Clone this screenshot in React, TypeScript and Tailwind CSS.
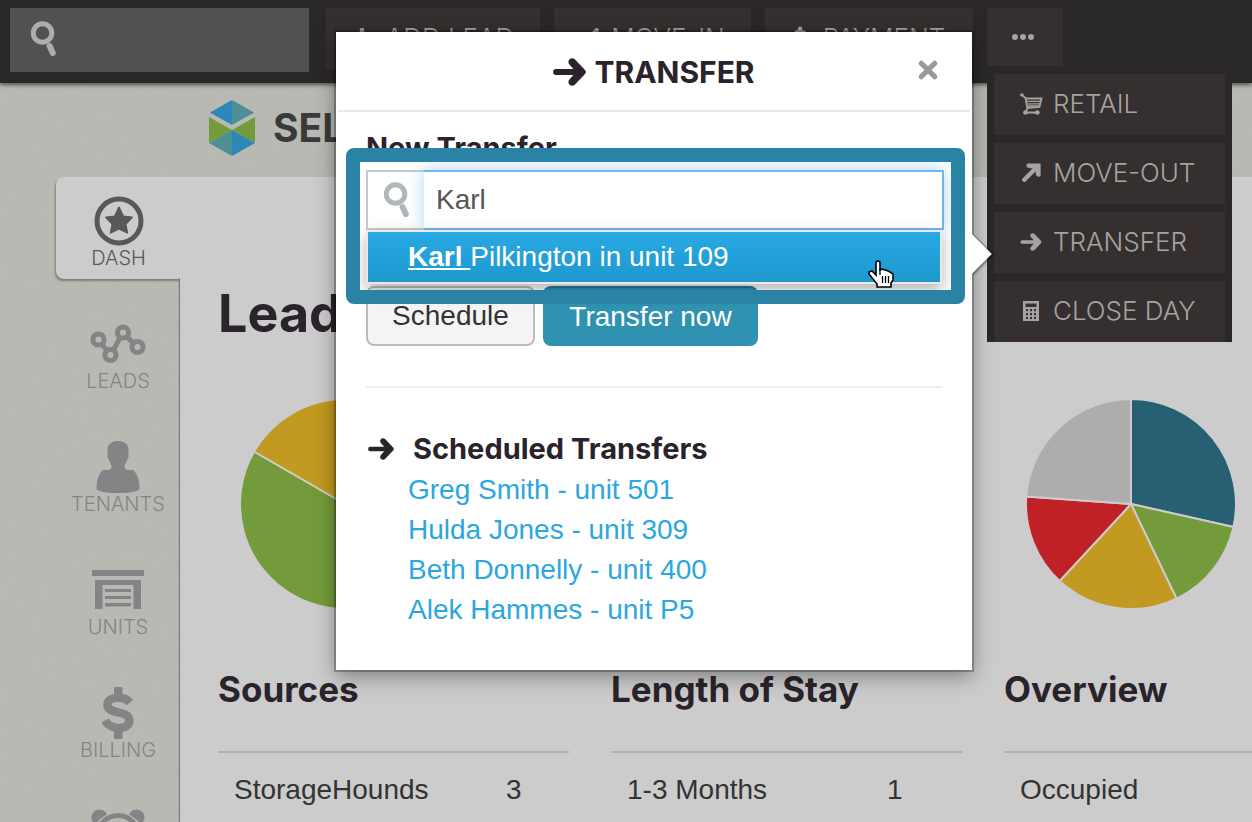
import { ReactNode, useState } from "react"

type Slice = { from: number; to: number; color: string }

type Report = {
  title: string
  slices: Slice[]
  row: string
  count?: string
  rowClass: string
}

const REPORTS: Report[] = [
  {
    title: "Sources",
    slices: [
      { from: 0, to: 120, color: "#276073" },
      { from: 120, to: 300, color: "#739b3b" },
      { from: 300, to: 360, color: "#c29a21" },
    ],
    row: "StorageHounds",
    count: "3",
    rowClass: "w-[288px] pl-4",
  },
  {
    title: "Length of Stay",
    slices: [
      { from: 0, to: 200, color: "#276073" },
      { from: 200, to: 360, color: "#739b3b" },
    ],
    row: "1-3 Months",
    count: "1",
    rowClass: "w-[276px] pl-4",
  },
  {
    title: "Overview",
    slices: [
      { from: 0, to: 102.6, color: "#276073" },
      { from: 102.6, to: 154.3, color: "#739b3b" },
      { from: 154.3, to: 222.8, color: "#c29a21" },
      { from: 222.8, to: 274.1, color: "#c02126" },
      { from: 274.1, to: 360, color: "#adadad" },
    ],
    row: "Occupied",
    rowClass: "w-[288px] pl-4",
  },
]

const TRANSFERS = [
  "Greg Smith - unit 501",
  "Hulda Jones - unit 309",
  "Beth Donnelly - unit 400",
  "Alek Hammes - unit P5",
]

const point = (deg: number) => {
  const rad = (deg * Math.PI) / 180
  return `${105 + 105 * Math.sin(rad)} ${105 - 105 * Math.cos(rad)}`
}

const Pie = ({ slices }: { slices: Slice[] }) => (
  <svg viewBox="0 0 210 210" className="ml-[22px] size-[210px]">
    {slices.map(({ from, to, color }) => (
      <path
        key={from}
        d={`M105 105 L${point(from)} A105 105 0 ${to - from > 180 ? 1 : 0} 1 ${point(to)} Z`}
        fill={color}
        stroke="#cccccc"
        strokeWidth="2"
      />
    ))}
  </svg>
)

const SearchIcon = () => (
  <svg viewBox="0 0 26 36" className="h-9 w-[26px]" fill="none" stroke="currentColor">
    <circle cx="11.500" cy="12" r="9.300" strokeWidth="5" />
    <path d="M18.600 25 L21.800 32" strokeWidth="6" strokeLinecap="round" />
  </svg>
)

const ArrowIcon = ({ className }: { className: string }) => (
  <svg viewBox="0 0 33 28" className={className}>
    <path d="M3 14 H24" stroke="currentColor" strokeWidth="5.8" strokeLinecap="round" />
    <path
      d="M16.6 1.2 C18 0 20.4 0 22 1.6 L32 12 Q33.6 14 32 16 L22 26.400 C20.400 28 18 28 16.600 26.800 C15 25.400 15 23 16.400 21.600 L23 14 L16.400 6.400 C15 5 15 2.600 16.600 1.200 Z"
      fill="currentColor"
    />
  </svg>
)

const DiagonalIcon = ({ className }: { className: string }) => (
  <svg viewBox="0 0 19 19" className={className}>
    <path d="M2.300 16.700 L14 5" stroke="currentColor" strokeWidth="4.400" strokeLinecap="round" />
    <path
      d="M6 0.400 H18.600 V12 C18.600 14.200 14.800 14.600 14.200 12 L13 6 L6.400 4.800 C3.600 4 4.200 0.800 6 0.400 Z"
      fill="currentColor"
    />
  </svg>
)

const PlusIcon = () => (
  <svg viewBox="0 0 20 20" className="size-5">
    <path d="M10 2 V18 M2 10 H18" stroke="currentColor" strokeWidth="4.400" strokeLinecap="round" />
  </svg>
)

const DollarIcon = ({ className }: { className: string }) => (
  <svg viewBox="0 0 32 52" className={className}>
    <rect x="12" y="0" width="8.500" height="12" rx="1.500" fill="currentColor" />
    <rect x="12" y="40" width="8.500" height="12" rx="1.500" fill="currentColor" />
    <path
      d="M28 15.500 C23 9.500 6 8.500 5.500 17.500 C5.500 28.500 27.500 22 27.500 34 C26.500 43.500 8 43 3 33.500"
      fill="none"
      stroke="currentColor"
      strokeWidth="8.500"
    />
  </svg>
)

const CartIcon = () => (
  <svg viewBox="0 0 23 22" className="h-[22px] w-[23px]" fill="none" stroke="currentColor">
    <path d="M2 2 L5.500 5 L7.400 15.500 L5.500 19.500 H17" strokeWidth="1.800" />
    <path d="M6 5.500 H21.500 L19.500 14 L7.500 15.200" strokeWidth="1.800" />
    <path d="M7 8.400 H20.500 M7.500 10.800 H20 M8 13 H19.500" strokeWidth="1.300" />
    <circle cx="1.800" cy="1.900" r="1.700" fill="currentColor" stroke="none" />
    <circle cx="5.400" cy="19.500" r="2.300" fill="currentColor" stroke="none" />
    <circle cx="17.400" cy="19.500" r="2.300" fill="currentColor" stroke="none" />
  </svg>
)

const CalculatorIcon = () => (
  <svg viewBox="0 0 16 20" className="h-5 w-4">
    <path
      fillRule="evenodd"
      fill="currentColor"
      d="M0 0H16V20H0Z M2.500 2.500V6H13.500V2.500Z M3 8V10.200H5V8Z M7 8V10.200H9V8Z M11 8V10.200H13V8Z M3 12V14.200H5V12Z M7 12V14.200H9V12Z M11 12V14.200H13V12Z M3 16V18H5V16Z M7 16V18H9V16Z M11 16V18H13V16Z"
    />
  </svg>
)

const DashIcon = () => (
  <svg viewBox="0 0 50 50" className="size-[50px]">
    <circle cx="25" cy="25" r="22" fill="none" stroke="currentColor" strokeWidth="5" />
    <path
      d="M25 11.500 L29.200 20.300 L38 21.400 L31.600 28 L33.300 36.800 L25 32.600 L16.700 36.800 L18.400 28 L12 21.400 L20.800 20.300 Z"
      fill="currentColor"
      stroke="currentColor"
      strokeWidth="1.800"
      strokeLinejoin="round"
    />
  </svg>
)

const LeadsIcon = () => (
  <svg viewBox="0 0 56 40" className="h-10 w-14" fill="none" stroke="currentColor">
    <path d="M12 20.500 L16.500 26 M24 25 L29.500 14.500 M37.500 13 L42 18" strokeWidth="5" />
    <g strokeWidth="5">
      <circle cx="8.500" cy="15.500" r="5.600" />
      <circle cx="20.500" cy="31" r="5.600" />
      <circle cx="33" cy="8.500" r="5.600" />
      <circle cx="47.500" cy="23" r="5.600" />
    </g>
  </svg>
)

const TenantsIcon = () => (
  <svg viewBox="0 0 44 52" className="h-[52px] w-11">
    <path
      d="M22 0 C29 0 32.500 3.500 32.500 9 V13 C33 15 32.500 17 31.500 18 C31 21 28.500 23 28.500 25.500 C28.500 28 30 29 32 29 H37 C41 32 43.500 39 43.500 47.500 C43.500 50 36 52 22 52 C8 52 0.500 50 0.500 47.500 C0.500 39 3 32 7 29 H12 C14 29 15.500 28 15.500 25.500 C15.500 23 13 21 12.500 18 C11.500 17 11 15 11.500 13 V9 C11.500 3.500 15 0 22 0 Z"
      fill="currentColor"
    />
  </svg>
)

const UnitsIcon = () => (
  <svg viewBox="0 0 52 40" className="h-10 w-[52px]">
    <path
      d="M0 0H52V6H0Z M3 10H49V39H41.500V15H10.500V39H3Z M13 19H39V22H13Z M13 26H39V29H13Z M13 33H39V36.500H13Z"
      fill="currentColor"
    />
  </svg>
)

const ClockIcon = () => (
  <svg viewBox="0 0 54 54" className="size-[54px]">
    <circle cx="8.500" cy="8.500" r="8" fill="currentColor" />
    <circle cx="45.500" cy="8.500" r="8" fill="currentColor" />
    <circle cx="27" cy="29" r="26" fill="#b8b9b3" />
    <circle cx="27" cy="27" r="20.500" fill="none" stroke="currentColor" strokeWidth="5" />
    <path d="M27 16 V28 H36" fill="none" stroke="currentColor" strokeWidth="4" />
  </svg>
)

const LogoIcon = () => (
  <svg viewBox="0 0 46 56" className="h-14 w-[46px]">
    <path d="M23 0 V25 L1 12.500 Z" fill="#2e88b7" />
    <path d="M23 0 V25 L45 12.500 Z" fill="#4c9094" />
    <path d="M0 17 L23 30 L0 43 Z" fill="#739b3b" />
    <path d="M46 17 L23 30 L46 43 Z" fill="#739b3b" />
    <path d="M23 30 V56 L0 43 Z" fill="#4c9094" />
    <path d="M23 30 V56 L46 43 Z" fill="#2e88b7" />
  </svg>
)

const HandCursor = () => (
  <svg viewBox="0 0 26 28" className="h-7 w-[26px]">
    <path
      d="M8 2 Q10 0 12 2 V10 L14 9 L17 10 L19 10.500 L22 12 L25 14 V20 L23 23 V27 H9 V24 L5 19 L1 14 V12 L4 11 L8 15 Z"
      fill="#ffffff"
      stroke="#000000"
      strokeWidth="1.600"
    />
    <path d="M14.500 16 V23 M17.500 16 V23 M20.500 16 V23 M12 9 V15" stroke="#000000" strokeWidth="1.300" />
  </svg>
)

const ToolbarButton = ({ className, children }: { className: string; children: ReactNode }) => (
  <button
    className={`flex h-[61px] shrink-0 items-center justify-center bg-[#35302f] pb-0.5 text-[26px] font-light ${className}`}
  >
    {children}
  </button>
)

const MenuItem = ({ icon, label }: { icon: ReactNode; label: string }) => (
  <button className="flex h-[61px] items-center gap-2 bg-[#35302f] pb-0.5 pl-[23px] text-[26px] font-light whitespace-nowrap">
    <span className="flex w-7 justify-center">{icon}</span>
    {label}
  </button>
)

const NavItem = ({ icon, label, active }: { icon: ReactNode; label?: string; active?: boolean }) => (
  <a
    href="#"
    className={`flex h-[102px] flex-col items-center rounded-l-lg pt-[19px] ${
      active
        ? "relative -mr-px bg-[#cccccc] text-[#585856] shadow-[-1px_2px_2px_#7d7d7a]"
        : "text-[#838486]"
    }`}
  >
    <span className="flex h-[50px] items-center">{icon}</span>
    <span className="text-xl leading-6 font-light">{label}</span>
  </a>
)

const Header = () => (
  <header className="relative z-10 flex h-[83px] items-start gap-3.5 bg-[#2a2826] px-2.5 pt-2 text-[#a5a3a1] shadow-[0_2px_4px_#555552]">
    <label className="mr-[3px] flex h-16 w-[299px] shrink-0 bg-[#52514f] pl-[21px] text-[#adadad]">
      <span className="pt-[13px]">
        <SearchIcon />
      </span>
      <input aria-label="Search" className="min-w-0 flex-1 bg-transparent px-3 text-[28px] outline-none" />
    </label>
    <ToolbarButton className="w-[214px] gap-3.5">
      <PlusIcon />
      ADD LEAD
    </ToolbarButton>
    <ToolbarButton className="w-[197px] gap-3">
      <DiagonalIcon className="size-[19px] rotate-180" />
      MOVE-IN
    </ToolbarButton>
    <ToolbarButton className="w-[208px] gap-4">
      <DollarIcon className="h-6 w-3.5" />
      PAYMENT
    </ToolbarButton>
    <div className="relative">
      <button
        aria-label="More"
        className="flex h-[58px] w-[76px] items-center justify-center gap-[2px] bg-[#35302f] pr-1"
      >
        <span className="size-[6px] rounded-sm bg-[#a5a3a1]" />
        <span className="size-[6px] rounded-sm bg-[#a5a3a1]" />
        <span className="size-[6px] rounded-sm bg-[#a5a3a1]" />
      </button>
      <div className="absolute top-full left-0 flex w-[245px] flex-col gap-2 bg-[#2a2826] px-[7px] pt-2">
        <MenuItem icon={<CartIcon />} label="RETAIL" />
        <MenuItem icon={<DiagonalIcon className="size-[19px]" />} label="MOVE-OUT" />
        <MenuItem icon={<ArrowIcon className="h-[18px] w-[22px]" />} label="TRANSFER" />
        <MenuItem icon={<CalculatorIcon />} label="CLOSE DAY" />
      </div>
    </div>
  </header>
)

const TransferDialog = () => {
  const [tenant, setTenant] = useState("Karl")

  return (
    <section
      role="dialog"
      aria-label="Transfer"
      className="absolute top-8 left-[336px] z-20 w-[636px] bg-white text-[28px] shadow-[0_0_0_2px_rgba(0,0,0,0.25),0_6px_20px_rgba(0,0,0,0.4)]"
    >
      <span className="absolute top-[208px] -right-3.5 size-7 rotate-45 bg-white shadow-[2px_-1px_2px_rgba(0,0,0,0.4)]" />
      <div className="relative bg-white">
        <div className="relative mx-0.5 flex h-20 items-center justify-center gap-2 border-b-2 border-[#e8e8e8] pt-0.5 text-[#2b232b]">
          <ArrowIcon className="h-7 w-[33px]" />
          <h2 className="font-[Inter] text-[30px] font-bold">TRANSFER</h2>
          <button aria-label="Close" className="absolute top-7 right-8 text-[#999999]">
            <svg viewBox="0 0 18 18" className="size-5">
              <path d="M3 3 L15 15 M15 3 L3 15" stroke="currentColor" strokeWidth="4.600" strokeLinecap="round" />
            </svg>
          </button>
        </div>

        <div className="px-[30px] pt-4 pb-10">
          <h3 className="mb-0.5 font-[Inter] text-[29px] leading-10 font-bold text-[#2b232b]">New Transfer</h3>
          <label className="-mr-0.5 flex h-[60px]">
            <span className="flex w-[58px] items-center justify-center border-2 border-r-0 border-[#c8c8c8] pl-0.5 text-[#b0b8bb]">
              <SearchIcon />
            </span>
            <input
              aria-label="Tenant"
              value={tenant}
              onChange={(e) => setTenant(e.target.value)}
              className="min-w-0 flex-1 border-2 border-l-0 border-[#72b6ee] bg-white px-3 text-[#555555] shadow-[0_0_16px_rgba(114,182,238,0.6)] outline-none"
            />
          </label>
          <div className="relative border-2 border-[#e9e9e9] shadow-[0_6px_14px_rgba(0,0,0,0.3)]">
            <button className="flex h-[50px] w-full items-center bg-linear-to-b from-[#28a9e4] to-[#1e98ce] pl-10 text-white">
              <span className="whitespace-pre">
                <b className="underline decoration-2 underline-offset-2">Karl </b>Pilkington in unit 109
              </span>
            </button>
          </div>
          <div className="mt-0.5 flex gap-2">
            <button className="h-[60px] w-[169px] rounded-lg border-2 border-[#bbbbbb] bg-[#f4f4f4] text-[#333333]">
              Schedule
            </button>
            <button className="h-[60px] w-[215px] rounded-lg border-t-2 border-[#267a96] bg-[#2f92b1] text-white">
              Transfer now
            </button>
          </div>

          <hr className="mt-10 border-t-2 border-[#eeeeee]" />

          <h3 className="mt-10 flex h-[42px] items-center gap-[19px] pl-0.5 font-[Inter] text-[29px] font-bold text-[#2b232b]">
            <ArrowIcon className="h-[22px] w-[26px]" />
            Scheduled Transfers
          </h3>
          <ul className="pl-[42px] leading-10 text-[#2ba7e0]">
            {TRANSFERS.map((transfer) => (
              <li key={transfer}>
                <a href="#">{transfer}</a>
              </li>
            ))}
          </ul>
        </div>
      </div>

      {/* callout frame around the search field */}
      <div className="pointer-events-none absolute top-[116px] right-[7px] left-2.5 h-[156px] rounded-lg border-14 border-[#2a83a5]" />
      <div className="pointer-events-none absolute top-[228px] right-[78px]">
        <HandCursor />
      </div>
    </section>
  )
}

export default function App() {
  return (
    <div className="relative h-screen overflow-hidden bg-[#b8b9b3] font-['Liberation_Sans',sans-serif]">
      <svg className="absolute h-full w-full opacity-5" aria-hidden="true">
        <filter id="paper">
          <feTurbulence type="fractalNoise" baseFrequency="0.1" numOctaves="3" />
          <feColorMatrix type="saturate" values="0" />
        </filter>
        <rect width="100%" height="100%" filter="url(#paper)" />
      </svg>

      <div className="font-[Inter]">
        <Header />
      </div>

      <div className="relative flex h-[94px] items-center gap-[18px] pb-1 pl-[209px]">
        <LogoIcon />
        <span className="font-[Inter] text-[39px] font-bold text-[#3a3a3b]">SELF</span>
      </div>

      <div className="relative flex pl-14">
        <nav className="flex w-[124px] shrink-0 flex-col gap-[21px] font-[Inter]">
          <NavItem icon={<DashIcon />} label="DASH" active />
          <NavItem icon={<LeadsIcon />} label="LEADS" />
          <NavItem icon={<TenantsIcon />} label="TENANTS" />
          <NavItem icon={<UnitsIcon />} label="UNITS" />
          <NavItem icon={<DollarIcon className="h-[52px] w-8" />} label="BILLING" />
          <NavItem icon={<ClockIcon />} />
        </nav>

        <main className="relative min-w-0 flex-1 bg-[#cccccc] pt-[105px] pl-[38px] shadow-[-1px_1px_1px_#777775]">
          {/* covers the panel edge where the active tab joins it */}
          <span className="absolute top-0 -left-1.5 h-[101px] w-2 bg-[#cccccc]" />
          <h1 className="font-[Inter] text-[52px] leading-16 font-bold text-[#2b232b]">Leads</h1>
          <div className="mt-[53px] flex gap-[42px]">
            {REPORTS.map(({ title, slices, row, count, rowClass }) => (
              <section key={title} className="w-[351px] shrink-0">
                <Pie slices={slices} />
                <h2 className="mt-14 mb-[38px] font-[Inter] text-[35px] leading-12 font-bold text-[#2b232b]">
                  {title}
                </h2>
                <table className="w-full border-t-2 border-[#b1b1b1] text-[28px] text-[#333333]">
                  <tbody>
                    <tr className="h-[74px]">
                      <td className={rowClass}>{row}</td>
                      <td>{count}</td>
                    </tr>
                  </tbody>
                </table>
              </section>
            ))}
          </div>
        </main>
      </div>

      <TransferDialog />
    </div>
  )
}
